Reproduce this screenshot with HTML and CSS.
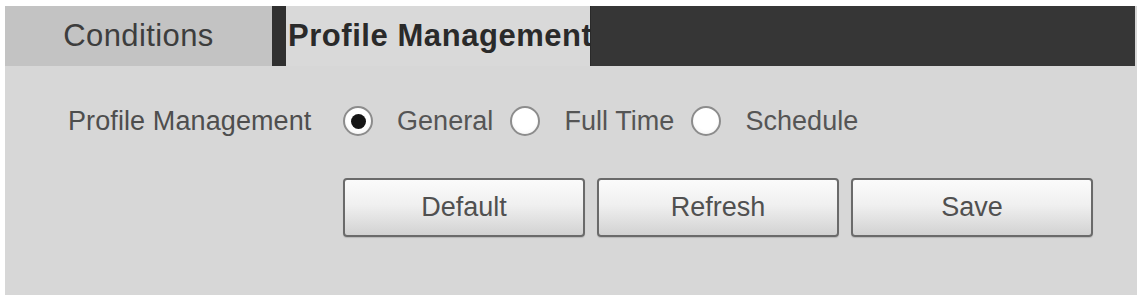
FILE: index.html
```html
<!DOCTYPE html>
<html>
<head>
<meta charset="utf-8">
<link rel="stylesheet" href="styles.css">
</head>
<body>
<div class="page">
  <div class="panel">
    <div class="tabs">
      <div class="tab tab-inactive">Conditions</div>
      <div class="tab-sep"></div>
      <div class="tab tab-active">Profile Management</div>
      <div class="tab-fill"></div>
    </div>
    <div class="content">
      <div class="row">
        <div class="label">Profile Management</div>
        <div class="options">
          <span class="radio checked"></span><span class="opt opt-first">General</span>
          <span class="radio"></span><span class="opt">Full Time</span>
          <span class="radio"></span><span class="opt">Schedule</span>
        </div>
      </div>
      <div class="buttons">
        <button class="btn">Default</button>
        <button class="btn">Refresh</button>
        <button class="btn">Save</button>
      </div>
    </div>
  </div>
</div>
</body>
</html>
```
FILE: styles.css
```css
html, body {
  margin: 0;
  padding: 0;
  background: #ffffff;
}
.page {
  padding: 6px 3px 3px 5px;
  font-family: "Liberation Sans", Arial, sans-serif;
}
.panel {
  width: 1132px;
  height: 289px;
  background: #d7d7d7;
  display: flex;
  flex-direction: column;
}
.tabs {
  display: flex;
  height: 60px;
}
.tab {
  display: flex;
  align-items: center;
  font-size: 31px;
}
.tab-inactive {
  width: 267px;
  justify-content: center;
  background: #c3c3c3;
  color: #3d3d3d;
  letter-spacing: 0.4px;
}
.tab-sep {
  width: 14px;
  background: #303030;
}
.tab-active {
  width: 302px;
  padding-left: 2px;
  background: #d9d9d9;
  color: #2a2a2a;
  font-weight: bold;
  letter-spacing: 0.55px;
  white-space: nowrap;
  overflow: visible;
}
.tab-fill {
  width: 544px;
  background: #363636;
  border-left: 1px solid #2a2a2a;
}
.content {
  display: flex;
  flex-direction: column;
  padding-left: 63px;
}
.row {
  display: flex;
  align-items: center;
  height: 40px;
  margin-top: 35px;
}
.label {
  width: 275px;
  font-size: 27px;
  color: #4e4e4e;
  letter-spacing: 0.1px;
}
.options {
  display: flex;
  align-items: center;
  font-size: 27px;
  color: #555555;
  letter-spacing: 0.05px;
}
.radio {
  box-sizing: border-box;
  width: 30px;
  height: 30px;
  border-radius: 50%;
  border: 2px solid #8c8c8c;
  background: radial-gradient(circle at 50% 40%, #ffffff 55%, #eeeeee 100%);
  display: flex;
  align-items: center;
  justify-content: center;
  margin-left: 17px;
}
.options .radio:first-child {
  margin-left: 0;
}
.radio.checked::after {
  content: "";
  width: 15px;
  height: 15px;
  border-radius: 50%;
  background: #151515;
}
.opt {
  margin-left: 24px;
}
.buttons {
  display: flex;
  gap: 12px;
  margin-left: 275px;
  margin-top: 37px;
}
.btn {
  box-sizing: border-box;
  width: 242px;
  height: 59px;
  border: 2px solid #6a6a6a;
  border-radius: 4px;
  background: linear-gradient(to bottom, #fbfbfb 0%, #f0f0f0 45%, #d2d2d2 100%);
  font-family: "Liberation Sans", Arial, sans-serif;
  font-size: 27px;
  color: #505050;
  padding: 0;
  box-shadow: 0 1px 1px rgba(0,0,0,0.15);
}
```
